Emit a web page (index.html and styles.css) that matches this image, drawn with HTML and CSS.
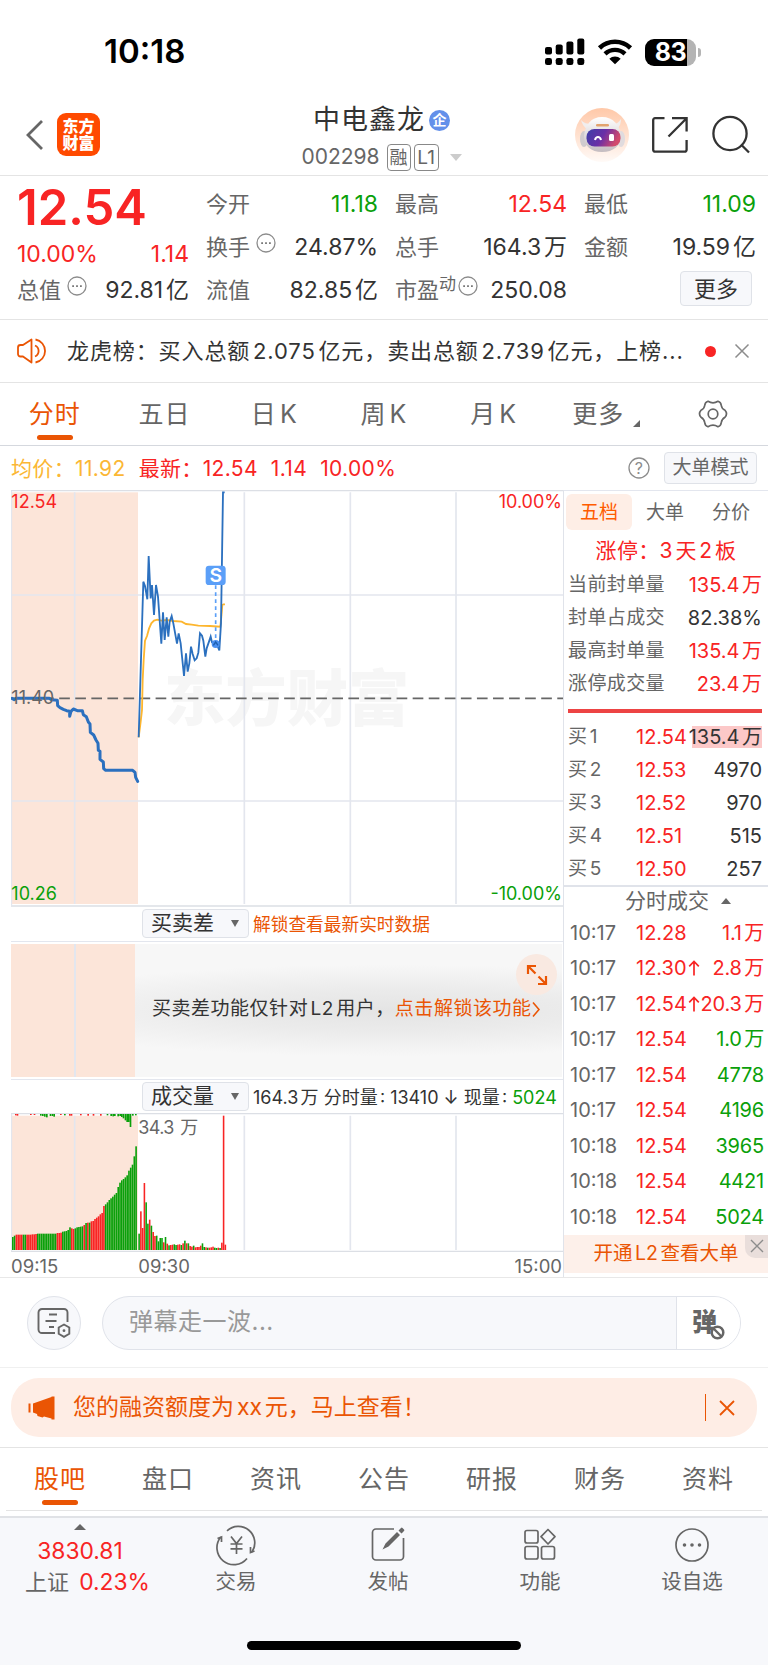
FILE: index.html
```html
<!DOCTYPE html>
<html lang="zh-CN">
<head>
    <meta charset="UTF-8">
    <meta name="viewport" content="width=device-width, initial-scale=1.0">
    <title>中电鑫龙 002298</title>
    <link rel="stylesheet" href="styles.css">
</head>
<body>

<!-- Status bar -->
<div class="status-bar">
    <span class="clock">10:18</span>
    <div class="status-icons">
        <svg width="40" height="28" viewBox="0 0 40 28">
            <rect x="0" y="9" width="7" height="7.500" rx="2"/>
            <rect x="10.700" y="6.500" width="7" height="10" rx="2"/>
            <rect x="21.400" y="3.500" width="7" height="13" rx="2"/>
            <rect x="32.300" y="0.500" width="7" height="16" rx="2"/>
            <rect x="0" y="20" width="7" height="7" rx="2.300"/>
            <rect x="10.700" y="20" width="7" height="7" rx="2.300"/>
            <rect x="21.400" y="20" width="7" height="7" rx="2.300"/>
            <rect x="32.300" y="20" width="7" height="7" rx="2.300"/>
        </svg>
        <svg class="wifi" width="36" height="26" viewBox="0 0 36 26">
            <path d="M2.500 9A22.500 22.500 0 0 1 33.500 9" fill="none" stroke="#000" stroke-width="4.600"/>
            <path d="M8 14.800A14.600 14.600 0 0 1 28 14.800" fill="none" stroke="#000" stroke-width="4.400"/>
            <path d="M12.300 19.800A8.300 8.300 0 0 1 23.700 19.800L18 25.300z"/>
        </svg>
        <div class="battery"><span>83</span></div>
        <i class="battery-tip"></i>
    </div>
</div>

<!-- Header -->
<header class="header">
    <div class="header-left">
        <svg width="18" height="32" viewBox="0 0 18 32"><path d="M16 2L2 16L16 30" fill="none" stroke="#666" stroke-width="2.800"/></svg>
        <div class="logo"><span>东方</span><span>财富</span></div>
    </div>
    <div class="header-title">
        <div class="stock-name">中电鑫龙<span class="corp">企</span></div>
        <div class="stock-code">002298<span class="tag tag-cn">融</span><span class="tag">L1</span><i class="caret"></i></div>
    </div>
    <div class="header-right">
        <svg width="54" height="54" viewBox="0 0 54 54">
            <defs>
                <linearGradient id="halo" x1="0" y1="0" x2="0" y2="1"><stop offset="0" stop-color="#ffc8a8"/><stop offset="1" stop-color="#fffaf7"/></linearGradient>
                <linearGradient id="visor" x1="0" y1="0" x2="1" y2="0.300"><stop offset="0" stop-color="#3c3fa8"/><stop offset="0.550" stop-color="#6a2fa6"/><stop offset="1" stop-color="#d2496b"/></linearGradient>
                <linearGradient id="shell" x1="0" y1="0" x2="0" y2="1"><stop offset="0" stop-color="#ffffff"/><stop offset="1" stop-color="#c4bcc0"/></linearGradient>
            </defs>
            <circle cx="27" cy="27" r="27" fill="url(#halo)"/>
            <path d="M6 12c1 4 3 7 6 9l4-5c-4 0-7-1-10-4zM46 11c0 4-1 7-4 10l-4-5c4 0 6-2 8-5z" fill="#f1eeee"/>
            <ellipse cx="9" cy="31" rx="4" ry="8" fill="#d0cbce"/>
            <ellipse cx="46" cy="31" rx="4" ry="8" fill="#e0dbde"/>
            <path d="M27 9C16 9 10 17 9 28c0 10 7 16 18 16s19-6 19-16C45 17 38 9 27 9z" fill="url(#shell)"/>
            <rect x="21" y="16" width="13" height="2.600" rx="1.300" fill="#e2a36e"/>
            <rect x="11.500" y="21" width="34" height="17.500" rx="8" fill="url(#visor)"/>
            <path d="M20 32c1-4 5-4 6 0" fill="none" stroke="#fff" stroke-width="2"/>
            <rect x="34" y="26" width="5" height="7" rx="1.500" fill="#fff"/>
        </svg>
        <svg class="share" width="38" height="38" viewBox="0 0 38 38" fill="none" stroke="#333" stroke-width="2.300">
            <path d="M13.500 2.200H4a1.800 1.800 0 0 0-1.800 1.800v29.800a1.800 1.800 0 0 0 1.800 1.800h29.800a1.800 1.800 0 0 0 1.800-1.800V24"/>
            <path d="M21 2.200h14.600V15.500M35.600 2.200L17.500 20.500"/>
        </svg>
        <svg class="search" width="40" height="40" viewBox="0 0 40 40" fill="none" stroke="#333" stroke-width="2.300">
            <circle cx="19" cy="18.500" r="16.600"/>
            <path d="M30 29.500L38 37.500"/>
        </svg>
    </div>
</header>

<!-- Quote -->
<section class="quote">
    <div class="price">12.54</div>
    <div class="cell"><label>今开</label><b class="down">11.18</b></div>
    <div class="cell"><label>最高</label><b class="up">12.54</b></div>
    <div class="cell"><label>最低</label><b class="down">11.09</b></div>
    <div class="cell change"><b class="up">10.00%</b><b class="up">1.14</b></div>
    <div class="cell"><label>换手</label><svg class="dots"><use href="#more-dots"/></svg><b>24.87%</b></div>
    <div class="cell"><label>总手</label><b>164.3万</b></div>
    <div class="cell"><label>金额</label><b>19.59亿</b></div>
    <div class="cell"><label>总值</label><svg class="dots"><use href="#more-dots"/></svg><b>92.81亿</b></div>
    <div class="cell"><label>流值</label><b>82.85亿</b></div>
    <div class="cell"><label>市盈</label><sup>动</sup><svg class="dots"><use href="#more-dots"/></svg><b>250.08</b></div>
    <div class="cell"><button class="more-btn">更多</button></div>
</section>

<svg width="0" height="0" class="symbols">
    <symbol id="more-dots" viewBox="0 0 20 20">
        <circle cx="10" cy="10" r="9" fill="none" stroke="#8c8c8c" stroke-width="1.300"/>
        <path d="M5.200 9.200h1.800v1.800H5.200zM9.100 9.200h1.800v1.800H9.100zM13 9.200h1.800v1.800H13z" fill="#777"/>
    </symbol>
</svg>

<!-- Notice -->
<div class="notice">
    <svg width="31" height="26" viewBox="0 0 31 26" fill="none" stroke="#ea5504" stroke-width="1.800">
        <path d="M14.500 1.500V24.500L6 18.500H3.500C2 18.500 1 17.500 1 16V9.500C1 8 2 7 3.500 7H6z" stroke-linejoin="round"/>
        <path d="M18 7.500a6 6 0 0 1 0 11M18.500 1.500a11.700 11.700 0 0 1 0 23"/>
    </svg>
    <p>龙虎榜：买入总额2.075亿元，卖出总额2.739亿元，上榜<span class="ellipsis">...</span></p>
    <i class="dot"></i>
    <svg width="16" height="16" viewBox="0 0 16 16"><path d="M1.500 1.500l13 13M14.500 1.500l-13 13" stroke="#8c8c8c" stroke-width="1.500"/></svg>
</div>

<!-- Period tabs -->
<nav class="tabs period-tabs">
    <a class="active">分时</a>
    <a>五日</a>
    <a>日K</a>
    <a>周K</a>
    <a>月K</a>
    <a class="more-tab">更多<i></i></a>
    <a>
        <svg width="30" height="30" viewBox="0 0 30 30" fill="none" stroke="#666" stroke-width="1.700">
            <path d="M10 2.300Q15 5.600 20 2.300Q23 3.200 23.300 6.500Q23.800 10 27 11.300Q30 14.800 27 18.300Q23.800 20 23.300 23.500Q23 26.800 20 27.700Q15 24.400 10 27.700Q7 26.800 6.700 23.500Q6.200 20 3 18.300Q0 14.800 3 11.300Q6.200 10 6.700 6.500Q7 3.200 10 2.300z" stroke-linejoin="round"/>
            <circle cx="15" cy="15" r="4.800"/>
        </svg>
    </a>
</nav>

<!-- Average / latest -->
<div class="summary">
    <span class="avg">均价：11.92</span>
    <span class="up">最新：12.54</span>
    <span class="up">1.14</span>
    <span class="up">10.00%</span>
    <svg width="22" height="22" viewBox="0 0 22 22"><circle cx="11" cy="11" r="10" fill="none" stroke="#8c8c8c" stroke-width="1.300"/><text x="11" y="16.500" class="ask">?</text></svg>
    <button>大单模式</button>
</div>

<!-- Charts and order book -->
<main class="market">
    <div class="charts">
        <!-- Price chart, drawn at 3 units per pixel -->
        <svg class="price-chart" viewBox="33 30 1656 1251">
            <rect x="33" y="37" width="381" height="1235" class="auction"/>
            <g class="watermark"><text x="492" y="724">东方财富</text></g>
            <g class="grid">
                <path d="M33 32H1689M33 1278H1689" class="frame"/>
                <path d="M33 345H1689M33 963H1689M224 37V1272M733 37V1272M1051 37V1272M1368 37V1272"/>
                <path d="M34 32V1278"/>
            </g>
            <path d="M33 655H1689" class="base-line"/>
            <path class="avg-line" d="M416 772L422 725L426 690L428 600L431 540L435 482L441 468L447 446L454 430L462 422L472 419L484 422L500 420L520 423L545 425L558 432L575 434L595 437L630 438L661 440L664 410L667 375L670 373L675 373"/>
            <path class="auction-line" d="M36 655L43 659L48 655H148L155 659L172 661L173 677L180 683L190 688L200 692L209 694L209 709L213 694L220 687L232 692L247 692L250 704L259 710L265 726L270 732L271 757L281 765L288 780L294 790L295 811L300 814L300 838L310 846L311 866L317 871H398L405 877L407 892L413 904"/>
            <path class="price-line" d="M416 772L430 305L435 318L442 358L446 228L452 355L456 315L462 405L468 315L474 350L484 491L489 397L494 480L500 412L505 470L509 425L515 408L520 430L531 491L536 460L542 490L552 588L558 520L563 575L568 550L573 500L578 522L584 541L590 535L595 518L600 460L606 467L610 482L616 530L620 505L627 485L632 470L636 487L650 492L658 511L663 430L669 37H674"/>
            <path d="M647 316V482" class="mark-line"/>
            <circle cx="647" cy="492" r="12" class="mark-dot"/>
            <path d="M640 496L647 486L654 496" fill="none" stroke="#1d5fb0" stroke-width="4"/>
            <rect x="617" y="257" width="60" height="58" rx="10" class="mark"/>
            <text x="647" y="305" class="mark-text">S</text>
            <text x="34" y="85" class="up">12.54</text>
            <text x="34" y="673" class="flat">11.40</text>
            <text x="34" y="1259" class="down">10.26</text>
            <text x="1686" y="85" class="up end">10.00%</text>
            <text x="1686" y="1259" class="down end">-10.00%</text>
        </svg>

        <div class="indicator-bar">
            <button>买卖差<i></i></button>
            <span class="orange">解锁查看最新实时数据</span>
        </div>
        <div class="diff-panel">
            <div class="diff-auction"><i></i></div>
            <div class="diff-lock">
                <p>买卖差功能仅针对L2用户，<a>点击解锁该功能</a></p>
                <svg width="8" height="17" viewBox="0 0 8 17"><path d="M1 1.500L7 8.500L1 15.500" fill="none" stroke="#ea5504" stroke-width="1.600"/></svg>
                <div class="expand">
                    <svg width="22" height="22" viewBox="0 0 22 22" fill="none" stroke="#ea5504" stroke-width="2.200">
                        <path d="M10 2H2v8M2 2l7.500 7.500M12 20H20v-8M20 20l-7.500-7.500"/>
                    </svg>
                </div>
            </div>
        </div>
        <div class="indicator-bar volume-bar">
            <button>成交量<i></i></button>
            <span>164.3万 分时量: 13410 ↓ 现量: <em>5024</em></span>
        </div>
        <svg class="volume-chart" viewBox="33 640 1656 417">
            <rect x="33" y="648" width="381" height="403" class="auction"/>
            <g class="grid">
                <path d="M33 642H1689M33 1055H1689" class="frame"/>
                <path d="M224 648V1051M733 648V1051M1051 648V1051M1368 648V1051"/>
                <path d="M34 642V1055"/>
            </g>
            <g id="bars"></g>
            <text x="415" y="702" class="flat peak">34.3万</text>
        </svg>
        <div class="time-axis"><span>09:15</span><span>09:30</span><span>15:00</span></div>
    </div>

    <aside class="book">
        <div class="book-tabs"><a class="active">五档</a><a>大单</a><a>分价</a></div>
        <div class="limit-title">涨停：3天2板</div>
        <div class="stat"><span>当前封单量</span><b class="up">135.4万</b></div>
        <div class="stat"><span>封单占成交</span><b>82.38%</b></div>
        <div class="stat"><span>最高封单量</span><b class="up">135.4万</b></div>
        <div class="stat"><span>涨停成交量</span><b class="up">23.4万</b></div>
        <div class="ratio"></div>
        <div class="bid"><span>买1</span><b class="up">12.54</b><b class="full">135.4万</b></div>
        <div class="bid"><span>买2</span><b class="up">12.53</b><b>4970</b></div>
        <div class="bid"><span>买3</span><b class="up">12.52</b><b>970</b></div>
        <div class="bid"><span>买4</span><b class="up">12.51</b><b>515</b></div>
        <div class="bid"><span>买5</span><b class="up">12.50</b><b>257</b></div>
        <div class="deal-title">分时成交<i></i></div>
        <div class="deal"><span>10:17</span><b class="up">12.28</b><b class="up">1.1万</b></div>
        <div class="deal"><span>10:17</span><b class="up">12.30<svg><use href="#arrow-up"/></svg></b><b class="up">2.8万</b></div>
        <div class="deal"><span>10:17</span><b class="up">12.54<svg><use href="#arrow-up"/></svg></b><b class="up">20.3万</b></div>
        <div class="deal"><span>10:17</span><b class="up">12.54</b><b class="down">1.0万</b></div>
        <div class="deal"><span>10:17</span><b class="up">12.54</b><b class="down">4778</b></div>
        <div class="deal"><span>10:17</span><b class="up">12.54</b><b class="down">4196</b></div>
        <div class="deal"><span>10:18</span><b class="up">12.54</b><b class="down">3965</b></div>
        <div class="deal"><span>10:18</span><b class="up">12.54</b><b class="down">4421</b></div>
        <div class="deal"><span>10:18</span><b class="up">12.54</b><b class="down">5024</b></div>
        <div class="promo">开通L2查看大单
            <div class="promo-close"><svg width="14" height="14" viewBox="0 0 14 14"><path d="M1 1l12 12M13 1L1 13" stroke="#8c8c8c" stroke-width="1.400"/></svg></div>
        </div>
    </aside>
</main>

<svg width="0" height="0" class="symbols">
    <symbol id="arrow-up" viewBox="0 0 12 16">
        <path d="M6 15.500V1.500M1.200 6.300L6 1.500L10.800 6.300" fill="none" stroke="#f82424" stroke-width="1.700"/>
    </symbol>
</svg>

<!-- Comment input -->
<div class="comment">
    <div class="comment-set">
        <svg width="34" height="32" viewBox="0 0 34 32" fill="none" stroke="#666" stroke-width="1.900">
            <path d="M18 26H5a3.500 3.500 0 0 1-3.500-3.500v-17A3.500 3.500 0 0 1 5 2h22a3.500 3.500 0 0 1 3.500 3.500V15M12 7.500h8M8.500 14h11M12 20h5"/>
            <path d="M27 17.500l5.300 3v6.300l-5.300 3l-5.300-3v-6.300z"/>
            <circle cx="27" cy="23.700" r="1.400" fill="#666" stroke="none"/>
        </svg>
    </div>
    <div class="comment-box">
        <span>弹幕走一波<span class="ellipsis">...</span></span>
        <div class="comment-off">弹<svg width="15" height="15" viewBox="0 0 15 15"><circle cx="7.500" cy="7.500" r="5.800" fill="#fff" stroke="#666" stroke-width="2.500"/><path d="M3.500 3.500l8 8" stroke="#666" stroke-width="2.400"/></svg></div>
    </div>
</div>

<!-- Margin banner -->
<div class="banner-wrap">
    <div class="banner">
        <svg width="28" height="24" viewBox="0 0 28 24" fill="#ea5504"><path d="M0.500 7.500h2v9h-2zM5 7.500L23.500 1V0.500h3V23.500h-3V22.500L16 20.500L14.500 21.500L9.500 20L9 18L5 16.500z"/></svg>
        <p>您的融资额度为xx元，马上查看！</p>
        <i></i>
        <svg width="16" height="16" viewBox="0 0 16 16"><path d="M1 1l14 14M15 1L1 15" stroke="#ea5504" stroke-width="1.800"/></svg>
    </div>
</div>

<!-- Content tabs -->
<nav class="tabs content-tabs">
    <a class="active">股吧</a>
    <a>盘口</a>
    <a>资讯</a>
    <a>公告</a>
    <a>研报</a>
    <a>财务</a>
    <a>资料</a>
</nav>

<!-- Bottom bar -->
<footer class="bottom-bar">
    <div class="toolbar">
        <div class="index"><i></i><b>3830.81</b><p>上证 <b>0.23%</b></p></div>
        <div class="tool">
            <svg width="40" height="36" viewBox="0 0 40 36" fill="none" stroke="#666" stroke-width="1.700">
                <path d="M11 4.800A16.500 16.500 0 0 1 36 26M31 32.500A16.500 16.500 0 0 1 4.800 11"/>
                <path d="M1.500 12.500l4-1.500v5M34.500 21v5.500l4-1.500"/>
                <path d="M15 10.500l5.500 7l5.500-7M20.500 17.500v10.500M14.500 18h12M14.500 22.800h12"/>
            </svg>
            <span>交易</span>
        </div>
        <div class="tool">
            <svg width="40" height="36" viewBox="0 0 40 36" fill="none" stroke="#666" stroke-width="1.700">
                <path d="M26 3H8a3.500 3.500 0 0 0-3.500 3.500v24A3.500 3.500 0 0 0 8 34h24a3.500 3.500 0 0 0 3.500-3.500V12"/>
                <path d="M14.500 23.500L17.500 17.500L29 6L32 9L20.500 20.500zM30.500 4.500L33 2a1 1 0 0 1 1.500 0L36 3.500a1 1 0 0 1 0 1.500L33.500 7.500z" fill="#666" stroke="none"/>
            </svg>
            <span>发帖</span>
        </div>
        <div class="tool">
            <svg width="40" height="36" viewBox="0 0 40 36" fill="none" stroke="#666" stroke-width="1.700">
                <rect x="5" y="4.500" width="13" height="12.500" rx="2"/>
                <rect x="5" y="20.500" width="13" height="12.500" rx="2"/>
                <rect x="21.500" y="20.500" width="13" height="12.500" rx="2"/>
                <path d="M28 3.500L35 10.700L28 18L21 10.700z" stroke-linejoin="round"/>
            </svg>
            <span>功能</span>
        </div>
        <div class="tool">
            <svg width="40" height="36" viewBox="0 0 40 36" fill="none" stroke="#666" stroke-width="1.700">
                <circle cx="20" cy="19" r="16"/>
                <path d="M12.500 19h0M20 19h0M27.500 19h0" stroke-width="3.600" stroke-linecap="round"/>
            </svg>
            <span>设自选</span>
        </div>
    </div>
    <div class="home-indicator"></div>
</footer>

<script>
    const bars = document.getElementById('bars');

    function addBar(x, y, width, height, type) {
        const rect = document.createElementNS('http://www.w3.org/2000/svg', 'rect');
        rect.setAttribute('x', x);
        rect.setAttribute('y', y);
        rect.setAttribute('width', width);
        rect.setAttribute('height', height);
        rect.setAttribute('class', type === 'R' ? 'bar-up' : 'bar-down');
        bars.appendChild(rect);
    }

    // Call auction, matched volume
    const auction = [39, 43, 46, 46, 46, 46, 46, 46, 46, 46, 46, 47, 47, 48, 49, 49, 49, 49, 49, 49, 49, 49, 49, 49, 49,
        51, 51, 52, 55, 56, 57, 60, 68, 65, 63, 65, 68, 69, 70, 71, 75, 81, 82, 82, 86, 87, 93, 97, 101, 107, 111, 132,
        137, 143, 150, 155, 160, 166, 171, 189, 202, 209, 213, 218, 224, 238, 247, 256, 281, 311];
    const auctionType = 'GGRRRRGGRRRRRRGGGGGGGGGGGRRRGGGGGRRGGGGGRGRGRRRRRRRRGGGGGGGGGGGGGGGGGG';
    auction.forEach((height, i) => addBar(36 + i * 5.36, 1051 - height, 4.9, height, auctionType[i]));

    // Call auction, unmatched volume
    const unmatched = [[45, 4, 'R'], [50, 5, 'R'], [90, 3, 'R'], [101, 3, 'R'], [120, 5, 'G'], [126, 6, 'G'], [132, 8, 'G'],
        [138, 10, 'G'], [149, 6, 'G'], [155, 6, 'G'], [160, 8, 'G'], [180, 3, 'R'], [192, 4, 'G'], [207, 5, 'R'], [212, 5, 'R'],
        [240, 4, 'R'], [262, 5, 'R'], [278, 5, 'R'], [300, 5, 'R'], [320, 4, 'G'], [331, 6, 'G'], [337, 7, 'G'], [342, 6, 'G'],
        [352, 7, 'G'], [358, 6, 'G'], [363, 9, 'G'], [368, 13, 'G'], [374, 19, 'G'], [379, 24, 'G'], [384, 24, 'G'],
        [389, 39, 'G'], [396, 5, 'G'], [405, 4, 'G']];
    unmatched.forEach(([x, height, type]) => addBar(x, 643, 5, height, type));

    // Continuous trading
    const volume = [49, 116, 66, 201, 143, 79, 91, 73, 54, 42, 43, 26, 36, 36, 23, 39, 19, 14, 15, 16, 17, 15, 16, 17, 15,
        20, 28, 20, 20, 12, 10, 13, 8, 9, 9, 13, 20, 9, 8, 7, 7, 8, 10, 7, 6, 7, 6, 22, 403, 16];
    const volumeType = 'GRRRGGRGRRGGGGRGRGRRGGRRGRGRGRRGRRRRGGRGRRRGGRGRRR';
    volume.forEach((height, i) => addBar(415 + i * 5.28, 1051 - height, 4.7, height, volumeType[i]));
</script>

</body>
</html>
```
FILE: styles.css
```css
* {
    box-sizing: border-box;
}

body {
    margin: 0;
    width: 768px;
    background-color: #fff;
    font-family: Inter, "Noto Sans CJK SC", sans-serif;
    font-size: 22px;
    line-height: 1.2;
    color: #333;
    white-space: nowrap;
    text-autospace: normal;
}

p {
    margin: 0;
}

b, em, i {
    font-weight: normal;
    font-style: normal;
}

svg {
    display: block;
    flex-shrink: 0;
}

button {
    font-family: inherit;
    padding: 0;
    border: 1px solid #dfe2e8;
    border-radius: 4px;
    background-color: #f7f8fb;
    color: #333;
    white-space: nowrap;
    text-autospace: normal;
}

.up {
    color: #f82424;
}

.down {
    color: #0aa00a;
}

.symbols {
    position: absolute;
}

.ellipsis {
    display: inline-block;
}

/* Status bar */
.status-bar {
    display: flex;
    justify-content: space-between;
    align-items: center;
    height: 96px;
    padding: 8px 67px 0 104px;
}

.clock {
    font-size: 33px;
    font-weight: 600;
    color: #000;
}

.status-icons {
    display: flex;
    align-items: center;
}

.wifi {
    margin: 0 12px 0 12px;
}

.battery {
    width: 51px;
    height: 27px;
    border-radius: 9px;
    background: linear-gradient(to right, #000 42.5px, #b4b4b4 42.5px);
    color: #fff;
    font-size: 25px;
    font-weight: 700;
    line-height: 27px;
    text-align: center;
    letter-spacing: -0.5px;
}

.battery-tip {
    width: 3px;
    height: 9px;
    margin-left: 2px;
    border-radius: 0 4px 4px 0;
    background-color: #b4b4b4;
}

/* Header */
.header {
    display: grid;
    grid-template-columns: 1fr auto 1fr;
    grid-template-rows: 77px;
    align-items: center;
    height: 80px;
    padding: 0 17px 2px 26px;
    border-bottom: 1px solid #e4e4e4;
}

.header-left, .header-right {
    display: flex;
    align-items: center;
}

.header-right {
    justify-content: flex-end;
}

.logo {
    display: flex;
    flex-direction: column;
    justify-content: center;
    width: 43px;
    height: 43px;
    margin-left: 13px;
    border-radius: 9px;
    background-color: #ff4a00;
    color: #fff;
    font-size: 16px;
    font-weight: 900;
    line-height: 17px;
    text-align: center;
}

.header-title {
    display: flex;
    flex-direction: column;
    align-items: center;
    margin: 9px 0 0 -14px;
}

.stock-name {
    display: flex;
    align-items: center;
    height: 36px;
    font-size: 27px;
    letter-spacing: 1px;
}

.corp {
    width: 21px;
    height: 21px;
    margin-left: 4px;
    border-radius: 50%;
    background-color: #6390ea;
    color: #fff;
    font-size: 14px;
    font-weight: 700;
    line-height: 20px;
    letter-spacing: 0;
    text-align: center;
}

.stock-code {
    display: flex;
    align-items: center;
    height: 38px;
    color: #666;
    font-size: 21px;
}

.tag {
    width: 25px;
    height: 27px;
    margin-left: 3px;
    border: 1px solid #888;
    border-radius: 4px;
    font-size: 19px;
    line-height: 25px;
    text-align: center;
}

.tag-cn {
    width: 24px;
    margin-left: 7px;
    font-size: 18px;
}

.caret {
    margin-left: 11px;
    border: 6px solid transparent;
    border-top: 7px solid #ccc;
    border-bottom: none;
}

.share {
    margin-left: 22px;
}

.search {
    margin-left: 22px;
}

/* Quote */
.quote {
    display: grid;
    grid-template-columns: repeat(4, 172px);
    grid-auto-rows: 43px;
    column-gap: 17px;
    height: 144px;
    padding: 7px 0 0 17px;
    border-bottom: 1px solid #e4e4e4;
}

.price {
    color: #f82424;
    font-size: 49px;
    font-weight: 600;
    line-height: 49px;
}

.cell {
    display: flex;
    align-items: center;
    justify-content: space-between;
}

.cell label {
    color: #666;
}

.cell b {
    font-size: 23px;
}

.cell b:last-child {
    margin-left: auto;
}

.change {
    padding-top: 14px;
}

.cell sup {
    align-self: flex-start;
    margin-top: 5px;
    color: #666;
    font-size: 17px;
    line-height: 20px;
}

.dots {
    width: 20px;
    height: 20px;
    margin: 0 0 9px 6px;
}

sup + .dots {
    margin-left: 2px;
}

.more-btn {
    width: 72px;
    height: 35px;
    margin: 0 4px 4px auto;
    font-size: 22px;
    line-height: 32px;
}

/* Notice */
.notice {
    display: flex;
    align-items: center;
    height: 63px;
    padding: 0 18px 0 17px;
    border-bottom: 1px solid #e4e4e4;
}

.notice p {
    width: 618px;
    margin-left: 19px;
    letter-spacing: 0.9px;
}

.dot {
    width: 11px;
    height: 11px;
    margin: 0 18px 0 auto;
    border-radius: 50%;
    background-color: #f82424;
}

/* Tabs */
.tabs {
    display: flex;
    height: 63px;
    color: #666;
    font-size: 25px;
    letter-spacing: 1px;
    line-height: 63px;
}

.tabs a {
    position: relative;
    flex: 1;
    text-align: center;
}

.tabs .active {
    color: #ea5504;
}

.tabs .active::after {
    content: "";
    position: absolute;
    left: 50%;
    bottom: 5px;
    width: 36px;
    height: 5px;
    margin-left: -18px;
    border-radius: 3px;
    background-color: #ea5504;
}

.period-tabs {
    border-bottom: 1px solid #d5d8de;
}

.period-tabs a {
    flex: 0 0 109.7px;
}

.period-tabs a:last-child {
    display: flex;
    flex: 1;
    align-items: center;
    justify-content: center;
}

.tabs .more-tab {
    padding-right: 10px;
}

.more-tab i {
    position: absolute;
    right: 18px;
    bottom: 18px;
    border-left: 7px solid transparent;
    border-bottom: 7px solid #666;
}

/* Average / latest */
.summary {
    display: flex;
    align-items: center;
    height: 44px;
    margin: 0 11px;
    font-size: 21px;
    letter-spacing: 0.35px;
}

.summary span {
    margin-right: 13px;
    padding-top: 2px;
}

.avg {
    color: #fbb735;
}

.summary svg {
    margin-left: auto;
}

.ask {
    fill: #8c8c8c;
    font-size: 16px;
    text-anchor: middle;
}

.summary button {
    width: 93px;
    height: 32px;
    margin-left: 14px;
    color: #666;
    font-size: 19px;
    line-height: 30px;
}

/* Market */
.market {
    display: flex;
    height: 788px;
    padding-left: 11px;
    border-bottom: 1px solid #e8e8e8;
}

.charts {
    width: 552px;
}

.price-chart {
    width: 552px;
    height: 417px;
}

.price-chart text, .volume-chart text {
    font-size: 54px;
}

.price-chart .up {
    fill: #f82424;
}

.price-chart .down {
    fill: #0aa00a;
}

.flat {
    fill: #666;
}

.volume-chart .peak {
    letter-spacing: -2px;
}

.end {
    text-anchor: end;
}

.auction {
    fill: #fce5d9;
}

.price-chart .watermark text {
    fill: #f6f6f6;
    font-size: 184px;
    font-weight: 900;
}

.grid path {
    fill: none;
    stroke: #e3e6ee;
    stroke-width: 5;
}

.grid .frame {
    stroke: #dcdfe5;
    stroke-width: 4;
}

.base-line {
    stroke: #666;
    stroke-width: 5;
    stroke-dasharray: 32 16.2;
}

.price-line, .auction-line, .avg-line {
    fill: none;
    stroke: #2b70bf;
    stroke-width: 5.5;
}

.auction-line {
    stroke-width: 9;
    stroke-linejoin: round;
    stroke-linecap: round;
}

.avg-line {
    stroke: #fdb62f;
}

.mark-line {
    stroke: #5b9ff8;
    stroke-width: 5;
    stroke-dasharray: 11 10;
}

.mark-dot {
    fill: #4a90f0;
}

.mark {
    fill: #5b9ff8;
}

.price-chart .mark-text {
    fill: #fff;
    font-size: 58px;
    font-weight: 600;
    text-anchor: middle;
}

.bar-up {
    fill: #f82424;
}

.bar-down {
    fill: #0aa00a;
}

.indicator-bar {
    display: flex;
    align-items: center;
    height: 34px;
    padding: 0 0 2px 131px;
    font-size: 18px;
}

.indicator-bar span {
    padding-top: 3px;
}

.indicator-bar button {
    display: flex;
    align-items: center;
    justify-content: space-between;
    width: 107px;
    height: 29px;
    margin-right: 4px;
    padding: 0 9px 0 8px;
    font-size: 21px;
    line-height: 26px;
}

.indicator-bar button i {
    border: 4px solid transparent;
    border-top: 7px solid #666;
    border-bottom: none;
}

.indicator-bar em {
    color: #0aa00a;
}

.indicator-bar .orange {
    color: #ea5504;
    font-size: 17.7px;
}

.diff-panel {
    display: flex;
    height: 139px;
    padding: 2px 1px 2px 0;
    border-top: 1px solid #e3e6ee;
    border-bottom: 1px solid #e3e6ee;
}

.diff-auction {
    width: 124px;
    background-color: #fce5d9;
}

.diff-auction i {
    display: block;
    width: 2px;
    height: 100%;
    margin-left: 63px;
    background-color: #e3e6ee;
}

.diff-lock {
    position: relative;
    display: flex;
    flex: 1;
    align-items: center;
    padding: 0 0 3px 17px;
    background: radial-gradient(ellipse 400px 46px at 60% 50%, #e4e4e4 0%, #ebebeb 45%, rgba(247, 247, 247, 0) 100%) #f7f7f7;
    font-size: 19px;
    letter-spacing: 0.52px;
}

.diff-lock svg {
    margin-left: 1px;
}

.diff-lock a {
    color: #ea5504;
}

.expand {
    position: absolute;
    top: 10px;
    right: 5px;
    display: flex;
    align-items: center;
    justify-content: center;
    width: 41px;
    height: 41px;
    border-radius: 50%;
    background-color: #f9e9e1;
}

.volume-bar {
    height: 33px;
    padding-bottom: 1px;
}

.volume-chart {
    width: 552px;
    height: 139px;
}

.time-axis {
    display: flex;
    height: 25px;
    padding-right: 1px;
    color: #666;
    font-size: 18.5px;
    line-height: 28px;
}

.time-axis span:nth-child(2) {
    margin: 0 auto 0 80px;
}

/* Order book */
.book {
    width: 205px;
    border-left: 1px solid #e0e3ea;
    font-size: 20px;
}

.book-tabs {
    display: flex;
    padding: 3px 4px 0 2px;
    border-top: 1px solid #e3e6ee;
}

.book-tabs a {
    flex: 1;
    height: 36px;
    border-radius: 6px;
    color: #666;
    font-size: 19px;
    line-height: 37px;
    text-align: center;
}

.book-tabs .active {
    background-color: #feeee6;
    color: #ff5c00;
}

.limit-title {
    height: 38px;
    color: #f82424;
    font-size: 21px;
    line-height: 41px;
    letter-spacing: 0.3px;
    text-align: center;
}

.stat, .bid, .deal {
    display: flex;
    align-items: center;
    justify-content: space-between;
    height: 33px;
    padding: 0 6px 0 4px;
}

.stat span, .bid span, .deal span {
    color: #666;
    font-size: 19px;
}

.stat span, .bid span {
    padding-top: 1px;
    letter-spacing: 0.4px;
}

.ratio {
    height: 4px;
    margin: 9px 6px 7px 4px;
    background-color: #ed4444;
}

.bid span, .deal span {
    width: 54px;
}

.bid b:last-child, .deal b:last-child {
    flex: 1;
    text-align: right;
}

.bid b, .deal b {
    width: 49px;
}

.bid b:nth-child(2), .deal b:nth-child(2) {
    margin-left: 14px;
}

.bid .full {
    height: 22px;
    margin-left: 7px;
    background-color: #fcc8c8;
    line-height: 22px;
    direction: rtl;
}

.deal-title {
    display: flex;
    align-items: center;
    height: 30px;
    padding-left: 61px;
    border-top: 2px solid #e0e3ea;
    color: #666;
    font-size: 21px;
}

.deal-title i {
    margin-left: 12px;
    border: 5px solid transparent;
    border-top: none;
    border-bottom: 6px solid #666;
}

.deal {
    height: 35.5px;
    padding: 0 4px 0 6px;
}

.deal span {
    width: 53px;
    font-size: 20px;
}

.deal b:nth-child(2) {
    display: flex;
    align-items: center;
    margin-left: 13px;
}

.deal b svg {
    width: 12px;
    height: 16px;
    margin-left: 1px;
}

.deal b:last-child {
    letter-spacing: -0.2px;
}

.promo {
    position: relative;
    height: 38px;
    background-color: #fdf0ea;
    color: #ea5504;
    font-size: 19.5px;
    line-height: 36px;
    text-align: center;
}

.promo-close {
    position: absolute;
    top: 0;
    right: 0;
    display: flex;
    align-items: center;
    justify-content: center;
    width: 23px;
    height: 23px;
    border-radius: 0 0 0 10px;
    background-color: #e9dedb;
}

/* Comment input */
.comment {
    display: flex;
    align-items: center;
    height: 90px;
    padding: 0 27px 0 27px;
    border-bottom: 1px solid #f0f0f0;
}

.comment-set {
    display: flex;
    align-items: center;
    justify-content: center;
    width: 54px;
    height: 54px;
    margin-right: 21px;
    border: 1px solid #e0e3ea;
    border-radius: 50%;
    background-color: #f7f8fb;
}

.comment-box {
    display: flex;
    flex: 1;
    height: 54px;
    overflow: hidden;
    border: 1px solid #e0e3ea;
    border-radius: 27px;
    background-color: #f7f8fb;
    color: #999;
    font-size: 24px;
    line-height: 49px;
    letter-spacing: 0.5px;
}

.comment-box > span {
    flex: 1;
    padding-left: 26px;
}

.comment-off {
    position: relative;
    width: 64px;
    padding-left: 15px;
    border-left: 1px solid #e0e3ea;
    background-color: #fff;
    color: #666;
    font-size: 25px;
    font-weight: 900;
    line-height: 51px;
}

.comment-off svg {
    position: absolute;
    top: 28px;
    left: 33px;
}

/* Margin banner */
.banner-wrap {
    height: 80px;
    padding: 10px 11px;
    border-bottom: 1px solid #e4e4e4;
}

.banner {
    display: flex;
    align-items: center;
    height: 59px;
    padding: 0 22px 0 17px;
    border-radius: 28px;
    background-color: #feede5;
    color: #ea5504;
    font-size: 23px;
}

.banner p {
    flex: 1;
    margin-left: 17px;
}

.banner i {
    width: 1.5px;
    height: 27px;
    margin-right: 13px;
    background-color: #ea5504;
}

/* Content tabs */
.content-tabs {
    margin: 0 6px;
    border-bottom: 1px solid #e4e4e4;
}

/* Bottom bar */
.bottom-bar {
    height: 149px;
    margin-top: 5px;
    border-top: 2px solid #e0e2e6;
    background-color: #f7f8fb;
    color: #666;
}

.toolbar {
    display: flex;
    height: 123px;
}

.index {
    display: flex;
    flex-direction: column;
    align-items: center;
    width: 160px;
    padding-top: 6px;
    line-height: 31px;
}

.index i {
    margin-bottom: 5px;
    border: 6px solid transparent;
    border-top: none;
    border-bottom: 6px solid #666;
}

.index b {
    color: #f82424;
    font-size: 22.8px;
}

.index p {
    padding-left: 15px;
}

.index p b {
    margin-left: 4px;
}

.tool {
    display: flex;
    flex: 1;
    flex-direction: column;
    align-items: center;
    padding-top: 8px;
    font-size: 20.5px;
}

.tool svg {
    overflow: visible;
}

.tool span {
    margin-top: 5px;
    line-height: 30px;
}

.home-indicator {
    width: 274px;
    height: 9px;
    margin: 0 auto;
    border-radius: 5px;
    background-color: #000;
}
```
